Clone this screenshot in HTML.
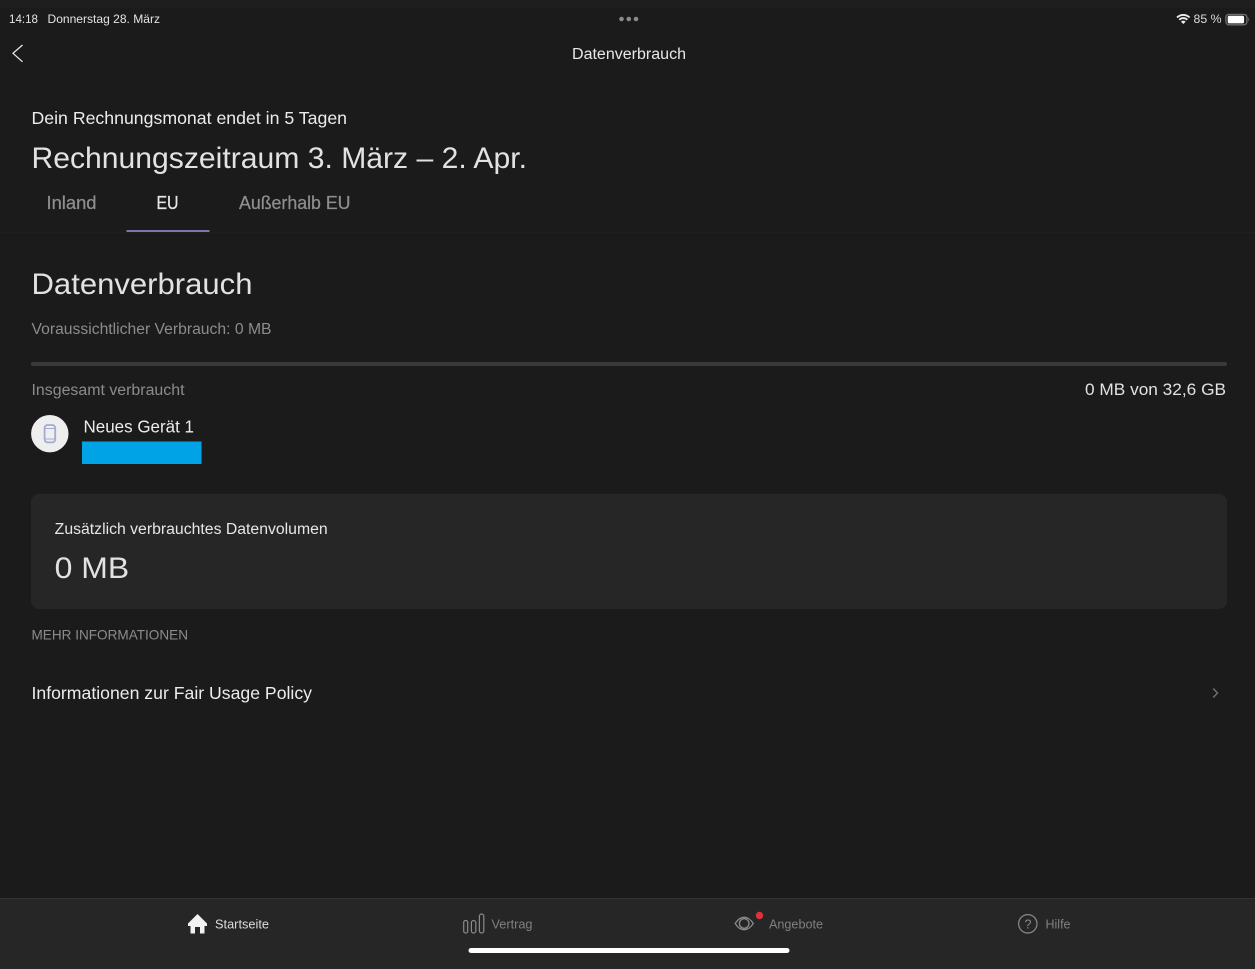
<!DOCTYPE html>
<html lang="de"><head><meta charset="utf-8"><title>Datenverbrauch</title>
<style>
html,body{margin:0;padding:0;background:#1b1b1c;width:1255px;height:969px;overflow:hidden}
svg{display:block;filter:blur(.3px)}
text{font-family:"Liberation Sans",sans-serif}
</style></head><body>
<svg width="1255" height="969" viewBox="0 0 1255 969" xmlns="http://www.w3.org/2000/svg">
<rect width="1255" height="969" fill="#1b1b1c"/>
<rect width="1255" height="8" fill="#1e1e1f"/>
<!-- status bar -->
<text x="9" y="23" font-size="12" fill="#e4e4e4" textLength="29" lengthAdjust="spacingAndGlyphs">14:18</text>
<text x="47.500" y="23" font-size="12" fill="#e4e4e4" textLength="112.500" lengthAdjust="spacingAndGlyphs">Donnerstag 28. März</text>
<circle cx="621.500" cy="19" r="2.300" fill="#8a8a8a"/><circle cx="628.800" cy="19" r="2.300" fill="#8a8a8a"/><circle cx="636" cy="19" r="2.300" fill="#8a8a8a"/>
<g fill="none" stroke="#eee" stroke-width="1.800" stroke-linecap="butt">
<path d="M1177 17.500a9 9 0 0 1 12.600 0"/><path d="M1179.300 19.800a5.500 5.500 0 0 1 8 0"/></g>
<path d="M1181 21.700a3 3 0 0 1 4.600 0L1183.300 24z" fill="#eee"/>
<text x="1193.500" y="23" font-size="12" fill="#dcdcdc" textLength="28" lengthAdjust="spacingAndGlyphs">85 %</text>
<rect x="1225.900" y="14.400" width="21" height="10.400" rx="3" fill="none" stroke="#6c6c6c" stroke-width="1.400"/>
<rect x="1227.700" y="15.800" width="16.400" height="7.600" rx="1.700" fill="#fff"/>
<path d="M1248.400 17.500c1 .4 1 3.600 0 4z" fill="#777"/>
<!-- nav -->
<path d="M22.500 45L13 53.300L22.500 61.800" fill="none" stroke="#e6e6e6" stroke-width="1.300"/>
<text x="572" y="59" font-size="15.500" fill="#e8e8e8" textLength="114" lengthAdjust="spacingAndGlyphs">Datenverbrauch</text>
<!-- headings -->
<text x="31.500" y="124" font-size="17.500" fill="#ececec" textLength="315.500" lengthAdjust="spacingAndGlyphs">Dein Rechnungsmonat endet in 5 Tagen</text>
<text x="31.500" y="168" font-size="30" fill="#e2e2e2" textLength="495.500" lengthAdjust="spacingAndGlyphs">Rechnungszeitraum 3. März – 2. Apr.</text>
<!-- tabs -->
<text x="46.500" y="209" font-size="18" fill="#8e8e8e" stroke="#8e8e8e" stroke-width=".25" textLength="50" lengthAdjust="spacingAndGlyphs">Inland</text>
<text x="156.500" y="209" font-size="18" fill="#e6e6e6" stroke="#e6e6e6" stroke-width=".3" textLength="22" lengthAdjust="spacingAndGlyphs">EU</text>
<text x="239" y="209" font-size="18" fill="#8e8e8e" stroke="#8e8e8e" stroke-width=".25" textLength="111.500" lengthAdjust="spacingAndGlyphs">Außerhalb EU</text>
<rect x="126.500" y="230" width="83" height="2" fill="#7d76a8"/>
<rect x="0" y="232" width="1255" height="1" fill="#1f1f20"/>
<!-- usage -->
<text x="31.500" y="294" font-size="30" fill="#e2e2e2" textLength="221" lengthAdjust="spacingAndGlyphs">Datenverbrauch</text>
<text x="31.500" y="334" font-size="15.500" fill="#8c8c8c" textLength="240" lengthAdjust="spacingAndGlyphs">Voraussichtlicher Verbrauch: 0 MB</text>
<rect x="31" y="362" width="1196" height="4" rx="2" fill="#3a3a3b"/>
<text x="31.500" y="395" font-size="15.500" fill="#8c8c8c" textLength="153" lengthAdjust="spacingAndGlyphs">Insgesamt verbraucht</text>
<text x="1085" y="395" font-size="17" fill="#e2e2e2" textLength="141" lengthAdjust="spacingAndGlyphs">0 MB von 32,6 GB</text>
<!-- device -->
<circle cx="49.800" cy="433.700" r="18.700" fill="#eeeeef"/>
<rect x="44.600" y="425" width="10.600" height="17.400" rx="3" fill="none" stroke="#a4a9d4" stroke-width="1.800"/>
<path d="M45 428.500h10M45 439h10" stroke="#a4a9d4" stroke-width="1"/>
<text x="83.500" y="432.500" font-size="17.500" fill="#ececec" textLength="110.500" lengthAdjust="spacingAndGlyphs">Neues Gerät 1</text>
<rect x="82" y="441.500" width="119.500" height="22.500" fill="#00a3e6"/>
<!-- card -->
<rect x="31" y="494" width="1196" height="115" rx="8" fill="#262627"/>
<text x="54.700" y="534" font-size="15.500" fill="#e6e6e6" textLength="273" lengthAdjust="spacingAndGlyphs">Zusätzlich verbrauchtes Datenvolumen</text>
<text x="54.700" y="578" font-size="29.500" fill="#e2e2e2" textLength="74.500" lengthAdjust="spacingAndGlyphs">0 MB</text>
<!-- more -->
<text x="31.500" y="639.500" font-size="14" fill="#8c8c8c" textLength="156.500" lengthAdjust="spacingAndGlyphs">MEHR INFORMATIONEN</text>
<text x="31.500" y="699" font-size="17.500" fill="#ececec" textLength="280.500" lengthAdjust="spacingAndGlyphs">Informationen zur Fair Usage Policy</text>
<path d="M1213.200 688.500L1217.500 693L1213.200 697.500" fill="none" stroke="#6f6f6f" stroke-width="1.500"/>
<!-- tab bar -->
<rect x="0" y="898" width="1255" height="71" fill="#262627"/>
<rect x="0" y="898" width="1255" height="1" fill="#333334"/>
<path d="M197.500 914L188 923.500V926H190.500V933.500H195V927H200V933.500H204.500V926H207V923.500Z" fill="#f2f2f2"/>
<text x="215" y="928.500" font-size="12.500" fill="#dcdcdc" textLength="54" lengthAdjust="spacingAndGlyphs">Startseite</text>
<g fill="none" stroke="#8a8a8a" stroke-width="1.200">
<rect x="463.700" y="920.500" width="4" height="12.500" rx="1.900"/>
<rect x="471.400" y="920.500" width="4.400" height="12.500" rx="2.100"/>
<rect x="479.400" y="914" width="4.400" height="19" rx="2.100"/>
</g>
<text x="491.500" y="928.500" font-size="12.500" fill="#808080" textLength="41" lengthAdjust="spacingAndGlyphs">Vertrag</text>
<g fill="none" stroke="#8a8a8a" stroke-width="1.300">
<path d="M735.200 923.500C738.500 918.600 741 917.300 744.200 917.300S750 918.600 753.300 923.500C750 928.400 747.400 929.700 744.200 929.700S738.500 928.400 735.200 923.500Z"/>
<circle cx="744.200" cy="923.500" r="4.800"/>
</g>
<circle cx="759.500" cy="915.500" r="3.700" fill="#d8343c"/>
<text x="769" y="928.500" font-size="12.500" fill="#808080" textLength="54" lengthAdjust="spacingAndGlyphs">Angebote</text>
<circle cx="1027.800" cy="923.800" r="9.200" fill="none" stroke="#8a8a8a" stroke-width="1.200"/>
<text x="1024.500" y="928.500" font-size="12.500" fill="#8a8a8a">?</text>
<text x="1045.500" y="928.500" font-size="12.500" fill="#808080" textLength="25" lengthAdjust="spacingAndGlyphs">Hilfe</text>
<rect x="468.500" y="948" width="321" height="5" rx="2.500" fill="#fff"/>
</svg>
</body></html>
